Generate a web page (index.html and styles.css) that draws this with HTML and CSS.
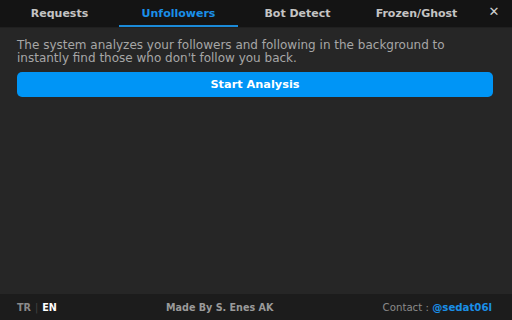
FILE: index.html
```html
<!DOCTYPE html>
<html lang="en">
<head>
    <meta charset="UTF-8">
    <title>Unfollowers</title>
    <link rel="stylesheet" href="styles.css">
</head>
<body>
    <div class="app">
        <nav class="tabs">
            <a class="tab">Requests</a>
            <a class="tab active">Unfollowers</a>
            <a class="tab">Bot Detect</a>
            <a class="tab">Frozen/Ghost</a>
            <span class="close-button">&#x2715;</span>
        </nav>

        <main class="content">
            <p class="info-text">The system analyzes your followers and following in the background to instantly find those who don't follow you back.</p>
            <button class="start-button">Start Analysis</button>
        </main>

        <footer class="footer">
            <div class="lang">
                <span class="lang-item">TR</span>
                <span class="lang-sep">|</span>
                <span class="lang-item current">EN</span>
            </div>
            <div class="made-by">Made By S. Enes AK</div>
            <div class="contact">Contact : <span class="contact-link">@sedat06l</span></div>
        </footer>
    </div>
</body>
</html>
```

FILE: styles.css
```css
body {
    margin: 0;
    width: 512px;
    height: 320px;
    background: #262626;
    font-family: "DejaVu Sans", sans-serif;
    overflow: hidden;
}
.app {
    display: flex;
    flex-direction: column;
    height: 100%;
}
.tabs {
    display: flex;
    align-items: stretch;
    height: 27px;
    background: #141414;
    border-bottom: 1px solid #202020;
}
.tab {
    flex: 0 0 119px;
    display: flex;
    align-items: center;
    justify-content: center;
    color: #c4c4c4;
    font-weight: bold;
    font-size: 11px;
    cursor: pointer;
    border-bottom: 2px solid transparent;
    box-sizing: border-box;
    padding-top: 1px;
}
.tab.active {
    color: #1a8fe8;
    border-bottom-color: #1b8ad8;
}
.close-button {
    flex: 1;
    display: flex;
    align-items: center;
    justify-content: center;
    color: #d0d0d0;
    font-size: 13px;
    font-weight: bold;
    padding-bottom: 4px;
    cursor: pointer;
}
.content {
    flex: 1;
    padding: 11px 20px 0 17px;
}
.info-text {
    margin: 0 0 7px 0;
    color: #a6a6a6;
    font-size: 12px;
    line-height: 13px;
}
.start-button {
    display: block;
    width: 476px;
    height: 25px;
    border: none;
    border-radius: 5px;
    background: #0095f6;
    color: #ffffff;
    font-family: "DejaVu Sans", sans-serif;
    font-weight: bold;
    font-size: 11.3px;
    cursor: pointer;
}
.footer {
    display: flex;
    align-items: center;
    justify-content: space-between;
    height: 26px;
    padding: 0 20px 0 17px;
    background: #1c1c1c;
    font-weight: bold;
    font-size: 9.6px;
    color: #8a8a8a;
}
.lang {
    display: flex;
    gap: 4px;
}
.lang-sep {
    color: #444;
    font-weight: normal;
}
.lang-item.current {
    color: #ffffff;
}
.made-by {
    color: #9a9a9a;
}
.contact {
    font-weight: normal;
    font-size: 10.2px;
    color: #8a8a8a;
}
.contact-link {
    color: #1a8fe8;
    font-weight: bold;
}
```
